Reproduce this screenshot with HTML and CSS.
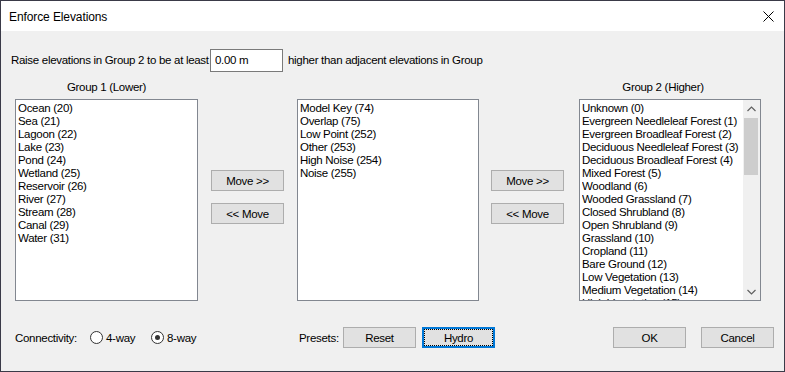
FILE: index.html
```html
<!DOCTYPE html>
<html lang="en">
<head>
    <meta charset="UTF-8">
    <title>Enforce Elevations</title>
    <link rel="stylesheet" href="styles.css">
</head>
<body>

<div class="window">
    <div class="titlebar">
        <span class="title">Enforce Elevations</span>
        <svg class="close" width="11" height="11" viewBox="0 0 11 11">
            <path d="M0.5 0.5 L10.5 10.5 M10.5 0.5 L0.5 10.5" stroke="#000" stroke-width="1"/>
        </svg>
    </div>

    <div class="content">
        <div class="raise-row">
            <span class="raise-text">Raise elevations in Group 2 to be at least</span>
            <input type="text" class="amount" value="0.00 m">
            <span>higher than adjacent elevations in Group</span>
        </div>

        <div class="lists">
            <div class="group group-1">
                <div class="group-label">Group 1 (Lower)</div>
                <ul class="listbox">
                    <li>Ocean (20)</li>
                    <li>Sea (21)</li>
                    <li>Lagoon (22)</li>
                    <li>Lake (23)</li>
                    <li>Pond (24)</li>
                    <li>Wetland (25)</li>
                    <li>Reservoir (26)</li>
                    <li>River (27)</li>
                    <li>Stream (28)</li>
                    <li>Canal (29)</li>
                    <li>Water (31)</li>
                </ul>
            </div>

            <div class="move-buttons move-1">
                <button class="btn">Move &gt;&gt;</button>
                <button class="btn">&lt;&lt; Move</button>
            </div>

            <div class="group group-mid">
                <div class="group-label">&nbsp;</div>
                <ul class="listbox">
                    <li>Model Key (74)</li>
                    <li>Overlap (75)</li>
                    <li>Low Point (252)</li>
                    <li>Other (253)</li>
                    <li>High Noise (254)</li>
                    <li>Noise (255)</li>
                </ul>
            </div>

            <div class="move-buttons move-2">
                <button class="btn">Move &gt;&gt;</button>
                <button class="btn">&lt;&lt; Move</button>
            </div>

            <div class="group group-2">
                <div class="group-label">Group 2 (Higher)</div>
                <div class="listbox scrolling">
                    <ul class="items">
                        <li>Unknown (0)</li>
                        <li>Evergreen Needleleaf Forest (1)</li>
                        <li>Evergreen Broadleaf Forest (2)</li>
                        <li>Deciduous Needleleaf Forest (3)</li>
                        <li>Deciduous Broadleaf Forest (4)</li>
                        <li>Mixed Forest (5)</li>
                        <li>Woodland (6)</li>
                        <li>Wooded Grassland (7)</li>
                        <li>Closed Shrubland (8)</li>
                        <li>Open Shrubland (9)</li>
                        <li>Grassland (10)</li>
                        <li>Cropland (11)</li>
                        <li>Bare Ground (12)</li>
                        <li>Low Vegetation (13)</li>
                        <li>Medium Vegetation (14)</li>
                        <li>High Vegetation (15)</li>
                    </ul>
                    <div class="scrollbar">
                        <div class="arrow">
                            <svg width="9" height="6" viewBox="0 0 9 6"><path d="M0.5 5 L4.5 1 L8.5 5" fill="none" stroke="#606060" stroke-width="1.2"/></svg>
                        </div>
                        <div class="track"><div class="thumb"></div></div>
                        <div class="arrow">
                            <svg width="9" height="6" viewBox="0 0 9 6"><path d="M0.5 1 L4.5 5 L8.5 1" fill="none" stroke="#606060" stroke-width="1.2"/></svg>
                        </div>
                    </div>
                </div>
            </div>
        </div>

        <div class="bottom-row">
            <div class="connectivity">
                <span class="label">Connectivity:</span>
                <label class="radio"><span class="circle"></span>4-way</label>
                <label class="radio"><span class="circle checked"></span>8-way</label>
            </div>
            <div class="presets">
                <span class="label">Presets:</span>
                <button class="btn">Reset</button>
                <button class="btn focused">Hydro</button>
            </div>
            <div class="actions">
                <button class="btn">OK</button>
                <button class="btn">Cancel</button>
            </div>
        </div>
    </div>
</div>

</body>
</html>
```

FILE: styles.css
```css
body {
    margin: 0;
    padding: 0;
    background-color: #1f1f2b;
    font-family: "Liberation Sans", Arial, sans-serif;
    font-size: 11.5px;
    letter-spacing: -0.3px;
    color: #000;
}
.window {
    width: 783px;
    height: 370px;
    border: 1px solid #3a3a48;
    background-color: #f0f0f0;
    overflow: hidden;
}
.titlebar {
    height: 30px;
    background-color: #fff;
    display: flex;
    align-items: center;
    justify-content: space-between;
    padding: 0 9px 0 8px;
}
.title {
    font-size: 12px;
    letter-spacing: -0.1px;
    padding-top: 1px;
}
.close {
    margin-right: 1px;
}
.content {
    padding: 17px 0 0 10px;
}
.raise-row {
    display: flex;
    align-items: center;
    height: 24px;
}
.raise-text {
    width: 199px;
}
.amount {
    width: 63px;
    height: 21px;
    margin: 0 5px 0 0;
    padding: 0 4px;
    border: 1px solid #7a7a7a;
    font-family: inherit;
    font-size: 11.5px;
    letter-spacing: -0.3px;
    background: #fff;
}
.lists {
    display: flex;
    margin-top: 7px;
    padding-left: 4px;
}
.group-label {
    height: 20px;
    line-height: 16px;
    text-align: center;
}
.group-2 .group-label {
    padding-right: 14px;
}
.listbox {
    list-style: none;
    margin: 0;
    width: 179px;
    height: 198px;
    padding: 2px 0 0 2px;
    border: 1px solid #828790;
    background-color: #fff;
    box-sizing: content-box;
    line-height: 13px;
    overflow: hidden;
}
.group-mid .listbox {
    width: 178px;
}
.listbox li {
    white-space: nowrap;
}
.scrolling {
    display: flex;
    width: 178px;
    padding: 0 0 0 2px;
    height: 200px;
}
.items {
    list-style: none;
    margin: 0;
    padding: 2px 0 0 0;
    flex: 1;
    overflow: hidden;
}
.scrollbar {
    width: 17px;
    display: flex;
    flex-direction: column;
    background-color: #f0f0f0;
}
.arrow {
    height: 17px;
    display: flex;
    align-items: center;
    justify-content: center;
}
.track {
    flex: 1;
    padding-top: 1px;
}
.thumb {
    margin: 0 2px 0 1px;
    height: 57px;
    background-color: #cdcdcd;
}
.move-buttons {
    display: flex;
    flex-direction: column;
    gap: 12px;
    padding-top: 91px;
}
.move-1 {
    margin: 0 13px 0 13px;
}
.move-2 {
    margin: 0 15px 0 12px;
}
.btn {
    width: 73px;
    height: 21px;
    padding: 0;
    border: 1px solid #adadad;
    background-color: #e1e1e1;
    font-family: inherit;
    font-size: 11.5px;
    letter-spacing: -0.3px;
    color: #000;
}
.btn.focused {
    border: 2px solid #0078d7;
    outline: 1px dotted #000;
    outline-offset: -3px;
}
.bottom-row {
    display: flex;
    align-items: center;
    margin-top: 26px;
    height: 21px;
}
.connectivity {
    display: flex;
    align-items: center;
    padding-left: 4px;
    width: 284px;
}
.connectivity .label {
    width: 75px;
}
.radio {
    display: flex;
    align-items: center;
    width: 61px;
}
.circle {
    width: 11px;
    height: 11px;
    border: 1px solid #333;
    border-radius: 50%;
    background: #fff;
    margin-right: 3px;
    position: relative;
}
.circle.checked::after {
    content: "";
    position: absolute;
    left: 3px;
    top: 3px;
    width: 5px;
    height: 5px;
    border-radius: 50%;
    background: #333;
}
.presets {
    display: flex;
    align-items: center;
    gap: 6px;
}
.presets .label {
    width: 38px;
}
.actions {
    display: flex;
    gap: 15px;
    margin-left: 118px;
}
```
